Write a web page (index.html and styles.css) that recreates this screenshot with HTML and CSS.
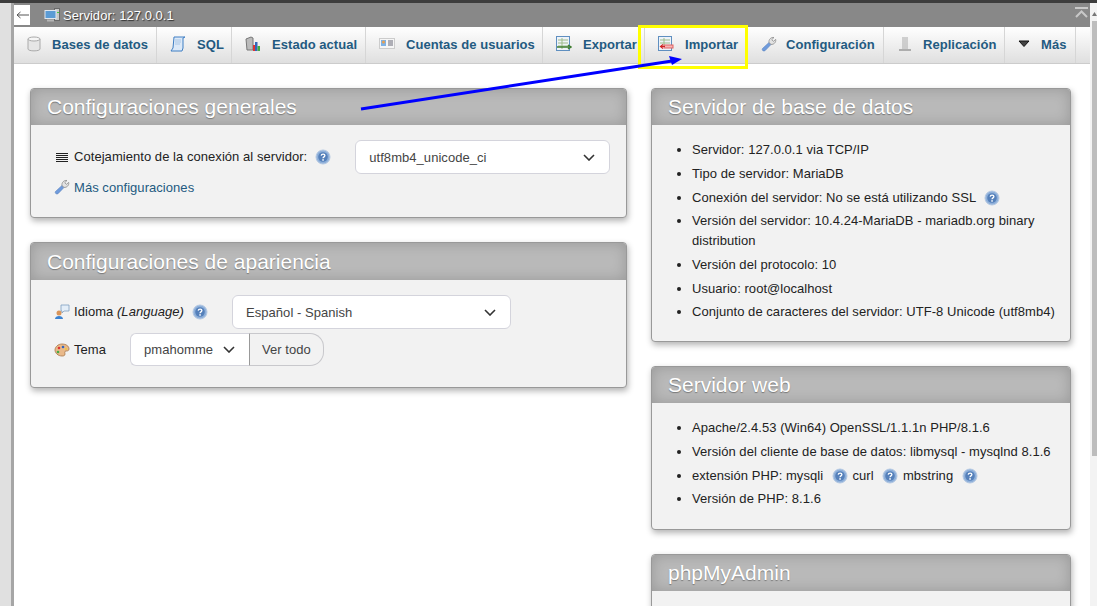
FILE: index.html
```html
<!DOCTYPE html>
<html lang="es">
<head>
    <meta charset="UTF-8">
    <meta name="viewport" content="width=device-width, initial-scale=1.0">
    <title>phpMyAdmin</title>
    <link rel="stylesheet" href="styles.css">
</head>
<body>

    <svg class="defs" width="0" height="0">
        <symbol id="help" viewBox="0 0 16 16">
            <circle cx="8" cy="8" r="7" fill="#8fb0da" stroke="#b4c8e2"/>
            <circle cx="8" cy="8" r="4.800" fill="#5580ba"/>
            <path d="M6.200 6.600c.2-2 3.700-2 3.700 0 0 1.300-1.900 1.300-1.900 2.700" fill="none" stroke="#fff" stroke-width="1.300"/>
            <rect x="7.300" y="10.200" width="1.500" height="1.500" fill="#fff"/>
        </symbol>
        <symbol id="wrench" viewBox="0 0 16 16">
            <path d="M1.500 12.500 8 6.500l2 2-6 6.200c-1.400 1-3.600-.6-2.500-2.200z" fill="#6f9bdc" stroke="#5c84c0" stroke-width=".6"/>
            <path d="M8 6.500C7.500 3.500 10 1 13 1.500L10.800 3.600l1.600 1.800 2.300-2c.6 3-2 5.300-4.700 5z" fill="#e3e3e3" stroke="#8a8a8a" stroke-width=".8"/>
        </symbol>
    </svg>

    <div class="top-line"></div>

    <div class="layout">
        <div class="nav-strip"></div>

        <div class="main">
            <div class="server-bar">
                <span class="back-btn">
                    <svg width="13" height="8" viewBox="0 0 13 8"><path d="M13 4H1M4.500 1 1 4l3.500 3" fill="none" stroke="#555"/></svg>
                </span>
                <svg class="bar-icon" width="16" height="16" viewBox="0 0 16 16">
                    <rect x="10.500" y="1.500" width="5" height="12" fill="#c9c9c9" stroke="#6a6a6a"/>
                    <rect x="1" y="3.500" width="11" height="8" fill="#5b9bd5" stroke="#dfe6ee"/>
                    <rect x="3" y="12.500" width="7" height="2" fill="#b5b5b5"/>
                    <rect x="13" y="5" width="2" height="1" fill="#4c4"/>
                </svg>
                <span class="server-name">Servidor: 127.0.0.1</span>
                <svg class="collapse-icon" width="13" height="12" viewBox="0 0 13 12">
                    <path d="M0 1h13M1 10 6.500 4.500 12 10" fill="none" stroke="#c8c8c8" stroke-width="2"/>
                </svg>
            </div>

            <ul class="tabs">
                <li class="tab tab-db">
                    <svg width="14" height="16" viewBox="0 0 14 16">
                        <path d="M1 3v10c0 2.500 12 2.500 12 0V3z" fill="#e6e6e6" stroke="#aaa"/>
                        <ellipse cx="7" cy="3" rx="6" ry="2" fill="#f6f6f6" stroke="#aaa"/>
                    </svg>
                    <span>Bases de datos</span>
                </li>
                <li class="tab tab-sql">
                    <svg width="16" height="16" viewBox="0 0 16 16">
                        <path d="M4 1h11l-2 1v10l-1 3H1l2-3z" fill="#dce9f8" stroke="#3f7fc4"/>
                        <path d="M5 4h6M5 6h6M5 8h5" stroke="#a9c6e6"/>
                    </svg>
                    <span>SQL</span>
                </li>
                <li class="tab tab-status">
                    <svg width="16" height="16" viewBox="0 0 16 16">
                        <path d="M1 3l5-2 2 1v12H2z" fill="#bbb" stroke="#777"/>
                        <rect x="8" y="9" width="2" height="6" fill="#d33"/>
                        <rect x="10" y="6" width="2.500" height="9" fill="#36b"/>
                        <rect x="12.500" y="10" width="2.500" height="5" fill="#4a4"/>
                    </svg>
                    <span>Estado actual</span>
                </li>
                <li class="tab tab-users">
                    <svg width="16" height="16" viewBox="0 0 16 16">
                        <rect x="0.500" y="2.500" width="15" height="10" fill="#f6f6f6" stroke="#ccc"/>
                        <rect x="2" y="4" width="5" height="6" fill="#7fb2e5"/>
                        <circle cx="4.500" cy="6" r="1.500" fill="#e8a050"/>
                        <path d="M9 5h5M9 7h5M9 9h5" stroke="#667"/>
                    </svg>
                    <span>Cuentas de usuarios</span>
                </li>
                <li class="tab tab-export">
                    <svg width="16" height="16" viewBox="0 0 16 16">
                        <rect x="0.500" y="0.500" width="13" height="14" fill="#eef3f9" stroke="#5f8fc0"/>
                        <path d="M2 4h10M2 7h10M2 10h10M6 2v11" stroke="#9dbb8a"/>
                        <path d="M1 11h12M12 9l3 2-3 2" fill="none" stroke="#3e7d2f" stroke-width="1.500"/>
                    </svg>
                    <span>Exportar</span>
                </li>
                <li class="tab tab-import">
                    <svg width="16" height="16" viewBox="0 0 16 16">
                        <rect x="0.500" y="0.500" width="13" height="14" fill="#eef3f9" stroke="#5f8fc0"/>
                        <path d="M2 4h10M2 7h10M6 2v8" stroke="#9dbb8a"/>
                        <rect x="6" y="9" width="9" height="3" fill="#f5b5b5" stroke="#e06060"/>
                        <path d="M7 10.500H3M5 8.500l-2.500 2 2.500 2" fill="none" stroke="#d02020" stroke-width="1.200"/>
                    </svg>
                    <span>Importar</span>
                </li>
                <li class="tab tab-config">
                    <svg width="16" height="16"><use href="#wrench"/></svg>
                    <span>Configuraci&oacute;n</span>
                </li>
                <li class="tab tab-repl">
                    <svg width="16" height="16" viewBox="0 0 16 16">
                        <path d="M6 1v10M8 1v10M10 1v10" stroke="#aaa"/>
                        <path d="M5 11h6v2H5z" fill="#ccc"/>
                        <path d="M2 14h12" stroke="#999" stroke-width="1.500"/>
                    </svg>
                    <span>Replicaci&oacute;n</span>
                </li>
                <li class="tab tab-more">
                    <svg width="12" height="8" viewBox="0 0 12 8">
                        <path d="M1 1h10L6 6.500z" fill="#444" stroke="#111" stroke-linejoin="round"/>
                    </svg>
                    <span>M&aacute;s</span>
                </li>
            </ul>

            <div class="content">
                <div class="col col-left">
                    <section class="panel panel-general">
                        <h2>Configuraciones generales</h2>
                        <div class="panel-body">
                            <div class="form-row row-collation">
                                <svg class="row-icon" width="16" height="16" viewBox="0 0 16 16">
                                    <path d="M2 4.500h12M2 6.500h12M2 8.500h12M2 10.500h12M2 12.500h12" stroke="#222"/>
                                </svg>
                                <span class="row-label">Cotejamiento de la conexi&oacute;n al servidor:</span>
                                <svg class="help" width="16" height="16"><use href="#help"/></svg>
                                <div class="select select-collation">
                                    <span>utf8mb4_unicode_ci</span>
                                    <svg width="12" height="7" viewBox="0 0 12 7"><path d="M1 1l5 5 5-5" fill="none" stroke="#333" stroke-width="1.600"/></svg>
                                </div>
                            </div>
                            <div class="more-settings">
                                <svg class="row-icon" width="16" height="16"><use href="#wrench"/></svg>
                                <a>M&aacute;s configuraciones</a>
                            </div>
                        </div>
                    </section>

                    <section class="panel panel-look">
                        <h2>Configuraciones de apariencia</h2>
                        <div class="panel-body">
                            <div class="form-row row-lang">
                                <svg class="row-icon" width="16" height="16" viewBox="0 0 16 16">
                                    <path d="M7 1h8v6H10L8 9V7H7z" fill="#e4eef8" stroke="#7f9fc0" stroke-width=".8"/>
                                    <circle cx="5" cy="9" r="2.500" fill="#d9955a"/>
                                    <path d="M1 15c0-4 8-4 8 0z" fill="#3b82d0"/>
                                </svg>
                                <span class="row-label">Idioma <i>(Language)</i></span>
                                <svg class="help" width="16" height="16"><use href="#help"/></svg>
                                <div class="select select-lang">
                                    <span>Espa&ntilde;ol - Spanish</span>
                                    <svg width="12" height="7" viewBox="0 0 12 7"><path d="M1 1l5 5 5-5" fill="none" stroke="#333" stroke-width="1.600"/></svg>
                                </div>
                            </div>
                            <div class="form-row row-theme">
                                <svg class="row-icon" width="16" height="16" viewBox="0 0 16 16">
                                    <path d="M8 2c4 0 7 2 7 5 0 2-2 2-3 2-2 0-1 2-1 3 0 2-2 2-3 2-4 0-7-3-7-6s3-6 7-6z" fill="#e9b98a" stroke="#a8774a" stroke-width=".8"/>
                                    <circle cx="5" cy="6" r="1.300" fill="#d33"/>
                                    <circle cx="9" cy="5" r="1.300" fill="#36b"/>
                                    <circle cx="4" cy="10" r="1.300" fill="#4a4"/>
                                    <circle cx="12" cy="7" r="1" fill="#ec3"/>
                                </svg>
                                <span class="theme-label">Tema</span>
                                <div class="theme-group">
                                    <div class="select select-theme">
                                        <span>pmahomme</span>
                                        <svg width="12" height="7" viewBox="0 0 12 7"><path d="M1 1l5 5 5-5" fill="none" stroke="#333" stroke-width="1.600"/></svg>
                                    </div>
                                    <span class="view-all">Ver todo</span>
                                </div>
                            </div>
                        </div>
                    </section>
                </div>

                <div class="col col-right">
                    <section class="panel panel-db">
                        <h2>Servidor de base de datos</h2>
                        <ul class="info-list">
                            <li>Servidor: 127.0.0.1 via TCP/IP</li>
                            <li>Tipo de servidor: MariaDB</li>
                            <li>Conexi&oacute;n del servidor: No se est&aacute; utilizando SSL <svg class="help help-after" width="16" height="16"><use href="#help"/></svg></li>
                            <li>Versi&oacute;n del servidor: 10.4.24-MariaDB - mariadb.org binary distribution</li>
                            <li>Versi&oacute;n del protocolo: 10</li>
                            <li>Usuario: root@localhost</li>
                            <li>Conjunto de caracteres del servidor: UTF-8 Unicode (utf8mb4)</li>
                        </ul>
                    </section>

                    <section class="panel panel-web">
                        <h2>Servidor web</h2>
                        <ul class="info-list">
                            <li>Apache/2.4.53 (Win64) OpenSSL/1.1.1n PHP/8.1.6</li>
                            <li>Versi&oacute;n del cliente de base de datos: libmysql - mysqlnd 8.1.6</li>
                            <li>extensi&oacute;n PHP: mysqli <svg class="help help-after" width="16" height="16"><use href="#help"/></svg> curl <svg class="help help-after" width="16" height="16"><use href="#help"/></svg> mbstring <svg class="help help-after" width="16" height="16"><use href="#help"/></svg></li>
                            <li>Versi&oacute;n de PHP: 8.1.6</li>
                        </ul>
                    </section>

                    <section class="panel panel-pma">
                        <h2>phpMyAdmin</h2>
                    </section>
                </div>
            </div>
        </div>

        <div class="scrollbar">
            <svg class="scroll-arrow" width="5" height="4" viewBox="0 0 5 4"><path d="M0 4 2.500 0 5 4z" fill="#777"/></svg>
            <div class="scroll-thumb"></div>
        </div>
    </div>

    <!-- annotations drawn over the screenshot -->
    <div class="mark-box"></div>
    <svg class="mark-arrow" width="1097" height="606" viewBox="0 0 1097 606">
        <path d="M361 109 672 61" stroke="#0000ff" stroke-width="3" fill="none"/>
        <path d="M682 59 669 56l3 9z" fill="#0000ff"/>
    </svg>

</body>
</html>
```

FILE: styles.css
```css
html, body {
    height: 100%;
    margin: 0;
    overflow: hidden;
}

body {
    display: flex;
    flex-direction: column;
    font-family: "Liberation Sans", Arial, sans-serif;
    font-size: 13px;
    letter-spacing: .05px;
    color: #222;
    background: #fff;
}

.defs {
    position: absolute;
}

svg {
    flex: none;
}

.top-line {
    flex: none;
    height: 3px;
    background: #3d3d3d;
}

.layout {
    flex: 1;
    min-height: 0;
    display: flex;
}

.nav-strip {
    flex: none;
    width: 11px;
    background: #e0e0e0;
    border-right: 3px solid #a6a6a6;
}

.main {
    flex: 1;
    min-width: 0;
    display: flex;
    flex-direction: column;
    overflow: hidden;
}

/* server breadcrumb */
.server-bar {
    flex: none;
    height: 24px;
    display: flex;
    align-items: center;
    background: #888;
    color: #fff;
    text-shadow: 1px 1px 1px #333;
}

.back-btn {
    display: flex;
    align-items: center;
    justify-content: center;
    width: 16px;
    height: 20px;
    margin-right: 14px;
    background: #fff;
}

.server-name {
    margin-left: 3px;
}

.collapse-icon {
    margin-left: auto;
    margin-right: 2px;
    margin-top: -4px;
}

/* top tabs */
.tabs {
    flex: none;
    display: flex;
    height: 37px;
    margin: 0;
    padding: 0;
    list-style: none;
    border-bottom: 1px solid #ccc;
    box-sizing: border-box;
    background: linear-gradient(#fff, #dfdfdf);
}

.tab {
    display: flex;
    align-items: center;
    box-sizing: border-box;
    padding-left: 13px;
    padding-bottom: 2px;
    border-right: 1px solid #d6d6d6;
    color: #235a81;
    font-weight: bold;
}

.tab span {
    margin-left: 11px;
    white-space: nowrap;
}

.tab-config span { margin-left: 9px; }
.tab-repl span { margin-left: 10px; }

.tab-db { width: 143px; }
.tab-sql { width: 75px; }
.tab-status { width: 134px; }
.tab-users { width: 177px; }
.tab-export { width: 102px; }
.tab-import { width: 103px; }
.tab-config { width: 136px; }
.tab-repl { width: 121px; }
.tab-more { width: 71px; }

/* two columns of panels */
.content {
    flex: none;
    display: flex;
    gap: 24px;
    align-items: flex-start;
    padding: 24px 0 0 16px;
}

.col {
    flex: none;
    display: flex;
    flex-direction: column;
    gap: 24px;
}

.col-left { width: 597px; }
.col-right { width: 420px; }

.panel {
    flex: none;
    box-sizing: border-box;
    background: #f2f2f2;
    border: 1px solid #999;
    border-radius: 4px;
    box-shadow: 1px 3px 6px rgba(0, 0, 0, .3);
    overflow: hidden;
}

.panel h2 {
    height: 36px;
    margin: 0;
    padding-left: 16px;
    background: #b9b9b9;
    box-shadow: inset 0 0 14px rgba(0, 0, 0, .18);
    color: #fff;
    font-size: 21px;
    font-weight: normal;
    letter-spacing: 0;
    line-height: 36px;
    text-shadow: 0 1px 1px #777;
}

.panel-look h2 {
    height: 37px;
    line-height: 37px;
}

.panel-body {
    padding: 15px 0 0 23px;
}

.panel-general { height: 130px; }
.panel-look { height: 146px; }

.form-row {
    display: flex;
    align-items: center;
}

.row-icon {
    margin-right: 4px;
}

.row-label {
    margin-bottom: 2px;
    white-space: nowrap;
}

.help {
    margin-left: 8px;
}

.select {
    display: flex;
    align-items: center;
    justify-content: space-between;
    box-sizing: border-box;
    height: 34px;
    padding: 0 14px 0 13px;
    background: #fff;
    border: 1px solid #d4d4dc;
    border-radius: 6px;
    color: #444;
}

.select-collation {
    width: 255px;
    margin-left: 24px;
}

.select-lang {
    width: 279px;
    margin-left: 24px;
}

.row-theme {
    margin-top: 4px;
}

.theme-label {
    width: 56px;
}

.theme-group {
    display: flex;
    height: 33px;
}

.select-theme {
    width: 119px;
    height: 33px;
    border-radius: 6px 0 0 6px;
    border-right: 0;
}

.view-all {
    display: flex;
    align-items: center;
    padding: 0 12px;
    background: #f2f2f2;
    border: 1px solid #c8c8cc;
    border-left-color: #999;
    border-radius: 0 14px 14px 0;
    color: #444;
}

.more-settings {
    display: flex;
    align-items: center;
    margin-top: 5px;
    color: #235a81;
}

.info-list {
    margin: 0;
    padding: 15px 8px 0 40px;
}

.info-list li {
    margin-bottom: 4.200px;
    line-height: 19.600px;
}

.help-after {
    vertical-align: -4px;
    margin-left: 5px;
    margin-right: 1px;
}

.panel-db { height: 254px; }
.panel-web { height: 164px; }
.panel-pma { height: 120px; }

/* page scrollbar */
.scrollbar {
    flex: none;
    width: 7px;
    background: #f3f3f3;
}

.scroll-arrow {
    display: block;
    margin: 9px 0 5px 2px;
}

.scroll-thumb {
    width: 5px;
    height: 435px;
    margin-left: 2px;
    background: #bdbdbd;
}

/* annotations */
.mark-box {
    position: absolute;
    left: 638px;
    top: 25px;
    width: 104px;
    height: 38px;
    border: 3px solid #ffff00;
}

.mark-arrow {
    position: absolute;
    left: 0;
    top: 0;
    pointer-events: none;
}
```
